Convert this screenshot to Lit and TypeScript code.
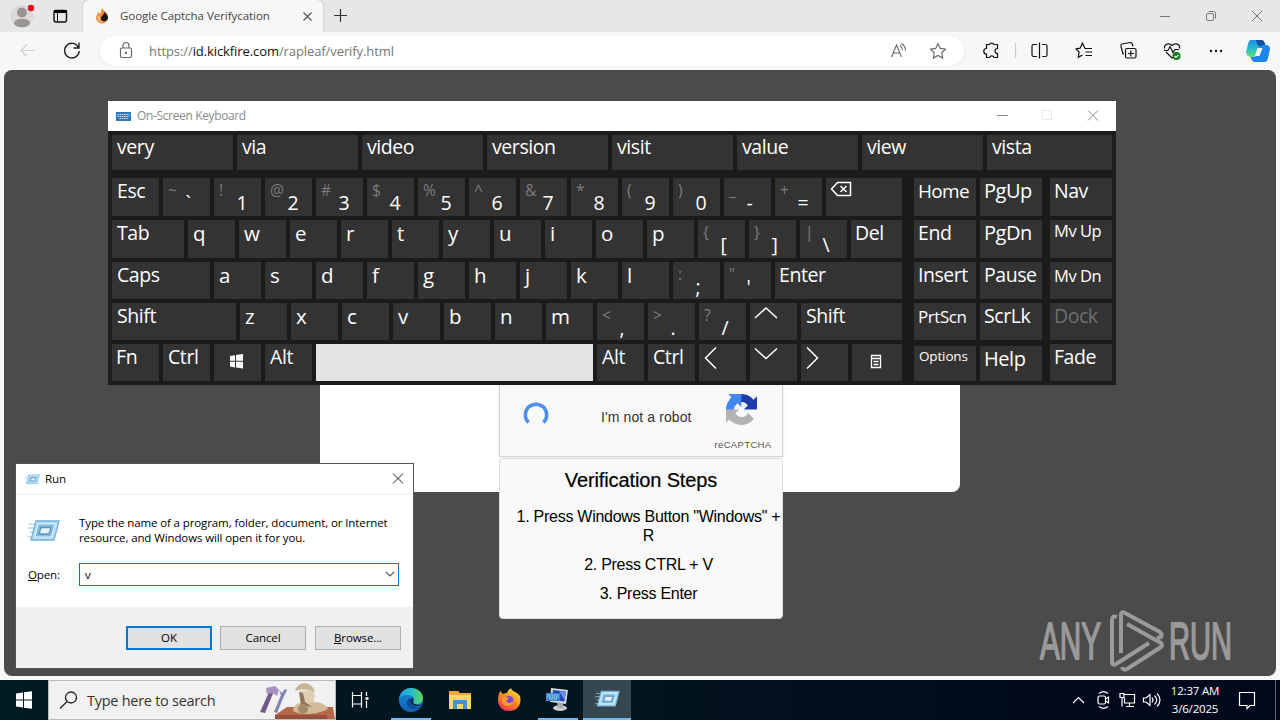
import { LitElement, html, css, svg, nothing } from 'lit';
import { customElement, property } from 'lit/decorators.js';
import { classMap } from 'lit/directives/class-map.js';

type Key = {
  t?: string;
  // shifted character, drawn dim in the top left
  s?: string;
  w?: number;
  c?: string;
  icon?: string;
};

const k = (t: string, w = 47, c = ''): Key => ({ t, w, c });
const ch = (t: string, w = 47): Key => ({ t, w, c: 'letter' });
const dual = (s: string, t: string, w = 47): Key => ({ s, t, w });

const WORDS = ['very', 'via', 'video', 'version', 'visit', 'value', 'view', 'vista'];

const ROWS: Key[][] = [
  [
    k('Esc'), dual('~', '`'), dual('!', '1'), dual('@', '2'), dual('#', '3'),
    dual('$', '4'), dual('%', '5'), dual('^', '6'), dual('&', '7'), dual('*', '8'),
    dual('(', '9'), dual(')', '0'), dual('_', '-'), dual('+', '='), { w: 76, icon: 'back' },
  ],
  [
    k('Tab', 72), ...'qwertyuiop'.split('').map((l) => ch(l)),
    dual('{', '['), dual('}', ']'), dual('|', '\\'), k('Del', 51, 'tight'),
  ],
  [
    k('Caps', 98), ...'asdfghjkl'.split('').map((l) => ch(l)),
    dual(':', ';'), dual('"', "'"), k('Enter', 127, 'tight'),
  ],
  [
    k('Shift', 124), ...'zxcvbnm'.split('').map((l) => ch(l)),
    dual('<', ','), dual('>', '.'), dual('?', '/'), { w: 47, icon: 'up' }, k('Shift', 101),
  ],
  [
    k('Fn', 47, 'tight'), k('Ctrl'), { w: 47, icon: 'win' }, k('Alt'), { w: 277, c: 'space' },
    k('Alt'), k('Ctrl'), { w: 47, icon: 'left' }, { w: 47, icon: 'down' },
    { w: 47, icon: 'right' }, { w: 50, icon: 'menu' },
  ],
];

const NAV: Key[][] = [
  [k('Home', 62, 's19'), k('PgUp', 62, 's20'), k('Nav', 62)],
  [k('End', 62), k('PgDn', 62, 's20'), k('Mv Up', 62, 's16 high')],
  [k('Insert', 62), k('Pause', 62), k('Mv Dn', 62, 's16')],
  [k('PrtScn', 62, 's17'), k('ScrLk', 62), k('Dock', 62, 'off')],
  [k('Options', 62, 's13 short'), k('Help', 62, 's20 short help'), k('Fade', 62)],
];

const KEY_ICONS: Record<string, unknown> = {
  back: svg`<svg class="glyph" width="76" height="38" fill="none" stroke="#fff" stroke-width="1.5">
    <path d="M11.500 4.500H24.500V17.500H11.500L5.500 11Z"/><path d="M14.500 8l6 6M20.500 8l-6 6"/></svg>`,
  up: svg`<svg class="glyph" width="47" height="37" fill="none" stroke="#fff" stroke-width="1.5"><path d="M5 15L16 5L27 15"/></svg>`,
  down: svg`<svg class="glyph" width="47" height="37" fill="none" stroke="#fff" stroke-width="1.5"><path d="M5 4.500L16 14.500L27 4.500"/></svg>`,
  left: svg`<svg class="glyph" width="47" height="37" fill="none" stroke="#fff" stroke-width="1.5"><path d="M17 3.500L6.500 14L17 24.500"/></svg>`,
  right: svg`<svg class="glyph" width="47" height="37" fill="none" stroke="#fff" stroke-width="1.5"><path d="M6 3.500L16.500 14L6 24.500"/></svg>`,
  win: svg`<svg class="glyph" width="47" height="37" fill="#fff"><path d="M16 12l5-.8v5.500H16zM22 11l7-1v6.700H22zM16 17.700h5v5.700l-5-.8zM22 17.700h7v6.700l-7-1z"/></svg>`,
  menu: svg`<svg class="glyph" width="50" height="37" fill="none" stroke="#fff" stroke-width="1.300"><path d="M19.500 11.500h9v12h-9zM19 14.500h10M21.500 17.500h5M21.500 20.500h5"/></svg>`,
};

const runIcon = (w: number, h: number) => html`<svg width=${w} height=${h} viewBox="0 0 32 24">
  <path d="M1 5h7M0 9h7M2 13h4M0 18h5" stroke="#8fc0e4" stroke-width="1"/>
  <path d="M8 2H31L26 21H3Z" fill="#b9dcf3" stroke="#6fb2de" stroke-width="1.300"/>
  <path d="M10 5H27L23.500 18H7Z" fill="#7dbce4" stroke="#e4f4fd"/>
  <path d="M13 8.500H23L21 15H11Z" fill="#e9f2f8" stroke="#5c94bf" stroke-width="1.300"/>
</svg>`;

@customElement('screen-keyboard')
export class ScreenKeyboard extends LitElement {
  static styles = css`
    :host {
      display: flex;
      flex-direction: column;
      width: 1008px;
      height: 284px;
      font-family: "Open Sans", "Noto Sans", sans-serif;
      background: #1b1b1b;
    }
    .title {
      display: flex;
      align-items: center;
      height: 30px;
      padding-left: 8px;
      background: #fff;
      color: #8b8b8b;
      font-size: 12px;
    }
    .title span {
      flex: 1;
      padding: 0 0 1px 6px;
      letter-spacing: -0.36px;
    }
    .words {
      display: flex;
      gap: 4px;
      padding: 4px 4px 8px;
    }
    .words .key {
      width: 121px;
      height: 35px;
      line-height: 24px;
    }
    .words .key:last-child {
      width: 125px;
    }
    .body {
      display: flex;
      padding: 0 4px;
    }
    .block {
      display: grid;
      grid-template-rows: 38px 38px 37px 37px 37px;
      row-gap: 4px;
      margin-right: 12px;
    }
    .nav {
      margin-right: 0;
    }
    .row {
      display: flex;
      gap: 4px;
    }
    .nav .key {
      padding-left: 4px;
      letter-spacing: -0.45px;
    }
    .nav .key:last-child {
      margin-left: 4px;
    }
    .key {
      position: relative;
      box-sizing: border-box;
      padding-left: 5px;
      background: #333;
      color: #fff;
      font-size: 19.5px;
      line-height: 26px;
      letter-spacing: -0.42px;
      white-space: nowrap;
    }
    .key.tight {
      padding-left: 4px;
    }
    .letter {
      font-size: 20.5px;
      line-height: 26px;
    }
    .dual {
      display: flex;
    }
    .dual .main {
      padding-top: 12px;
    }
    .dim {
      width: 17.5px;
      color: #7d7d7d;
      font-size: 15.5px;
      line-height: 24px;
    }
    .space {
      background: #e4e4e4;
    }
    .glyph {
      display: block;
      margin-left: -5px;
    }
    .s20 { font-size: 20px; line-height: 25px; }
    .s19 { font-size: 19px; }
    .nav .s19 { letter-spacing: -0.7px; }
    .s17 { font-size: 17px; line-height: 27px; }
    .s16 { font-size: 16.5px; line-height: 27px; }
    .s13 { font-size: 13.5px; line-height: 21px; }
    .nav .s13 { letter-spacing: -0.15px; padding-left: 5px; }
    .high { line-height: 21px; }
    .help { line-height: 26px; }
    .short { margin-top: 2px; }
    .off { color: #6f6f6f; }
  `;

  renderKey(key: Key) {
    const cls = `key ${key.c ?? ''} ${key.s ? 'dual' : ''}`;
    return html`<div class=${cls} style="width:${key.w}px">${key.s
      ? html`<span class="dim">${key.s}</span><span class="main">${key.t}</span>`
      : key.icon ? KEY_ICONS[key.icon] : key.t ?? nothing}</div>`;
  }

  render() {
    return html`
      <div class="title">
        <svg width="15" height="9"><rect width="15" height="9" fill="#2c78c0"/>
          <path d="M1.500 2.500h12M1.500 4.500h12M3.500 6.500h8" stroke="#d5e8f8" stroke-dasharray="1.500 .7"/></svg>
        <span>On-Screen Keyboard</span>
        <svg width="124" height="30" fill="none" stroke="#8a8a8a">
          <path d="M5 14.500h11"/><path d="M50.500 9.500h9v9h-9z" stroke="#e9e9e9"/>
          <path d="M96 9.500l10 10M106 9.500l-10 10"/></svg>
      </div>
      <div class="words">${WORDS.map((w) => html`<div class="key">${w}</div>`)}</div>
      <div class="body">
        <div class="block">${ROWS.map((r) => html`<div class="row">${r.map((x) => this.renderKey(x))}</div>`)}</div>
        <div class="block nav">${NAV.map((r) => html`<div class="row">${r.map((x) => this.renderKey(x))}</div>`)}</div>
      </div>
    `;
  }
}

@customElement('run-dialog')
export class RunDialog extends LitElement {
  static styles = css`
    :host {
      display: flex;
      flex-direction: column;
      box-sizing: border-box;
      width: 399px;
      height: 206px;
      border: 1px solid #555;
      background: #fff;
      color: #000;
      font: 11.5px/15px "Open Sans", "Noto Sans", sans-serif;
      letter-spacing: -0.11px;
    }
    .title {
      display: flex;
      align-items: center;
      height: 30px;
      padding: 0 9px;
      border-bottom: 1px solid #eee;
    }
    .title span {
      flex: 1;
      padding: 0 0 2px 5px;
    }
    .info {
      display: flex;
      gap: 19px;
      padding: 20px 0 0 12px;
    }
    .info svg {
      margin-top: 4px;
    }
    .open {
      display: flex;
      align-items: center;
      padding: 18px 14px 0 12px;
    }
    .open label {
      width: 51px;
    }
    .field {
      display: flex;
      flex: 1;
      align-items: center;
      justify-content: space-between;
      box-sizing: border-box;
      height: 23px;
      padding: 0 3px 0 5px;
      border: 1px solid #0078d7;
    }
    .foot {
      display: flex;
      flex: 1;
      gap: 8px;
      align-items: flex-start;
      justify-content: flex-end;
      margin-top: 21px;
      padding: 19px 12px 0 0;
      background: #f0f0f0;
    }
    .btn {
      box-sizing: border-box;
      width: 86px;
      height: 24px;
      border: 1px solid #adadad;
      background: #e1e1e1;
      line-height: 22px;
      text-align: center;
    }
    .cancel {
      margin-right: 1px;
    }
    .primary {
      border: 2px solid #0078d7;
      line-height: 20px;
    }
  `;

  render() {
    return html`
      <div class="title">${runIcon(15, 11)}<span>Run</span>
        <svg width="12" height="12" fill="none" stroke="#222"><path d="M1 .5l10 10M11 .5L1 10.500"/></svg></div>
      <div class="info">${runIcon(32, 24)}
        <div>Type the name of a program, folder, document, or Internet<br>resource, and Windows will open it for you.</div>
      </div>
      <div class="open">
        <label><u>O</u>pen:</label>
        <div class="field">v<svg width="10" height="7" fill="none" stroke="#555" stroke-width="1.200"><path d="M1 1l4 4l4-4"/></svg></div>
      </div>
      <div class="foot">
        <div class="btn primary">OK</div>
        <div class="btn cancel">Cancel</div>
        <div class="btn"><u>B</u>rowse...</div>
      </div>
    `;
  }
}

@customElement('task-bar')
export class TaskBar extends LitElement {
  static styles = css`
    :host {
      display: flex;
      height: 40px;
      background: linear-gradient(90deg, #001a22, #03141e 50%, #000a1c 80%);
      color: #fff;
      font: 11.5px/18px "Open Sans", "Noto Sans", sans-serif;
    }
    svg {
      display: block;
    }
    .start {
      width: 48px;
    }
    .search {
      display: flex;
      box-sizing: border-box;
      width: 288px;
      border: 1px solid #b9bcbd;
      background: #f1f1f1;
      color: #333;
      font-size: 14.5px;
      line-height: 39px;
      letter-spacing: -0.27px;
    }
    .search span {
      flex: 1;
    }
    .app {
      box-sizing: border-box;
      width: 50px;
      height: 40px;
    }
    .tab {
      display: flex;
      box-sizing: border-box;
      justify-content: center;
      width: 40px;
      height: 40px;
      margin: 0 4.500px;
      padding-top: 8px;
      border-bottom: 2px solid transparent;
    }
    .open {
      border-bottom-color: #76b9ed;
    }
    .active {
      width: 48px;
      margin: 0 0 0 1px;
      background: #37474f;
    }
    .tray {
      display: flex;
      flex: 1;
      justify-content: flex-end;
    }
    .clock {
      width: 62px;
      padding-top: 2px;
      text-align: center;
      letter-spacing: -0.2px;
    }
  `;

  app(icon: unknown, open = false, active = false) {
    return html`<div class=${classMap({ tab: true, open, active })}>${icon}</div>`;
  }

  render() {
    return html`
      <svg class="start" width="48" height="40" fill="#fff"><path d="M16 13.500l7-1v7H16zM24 12.300l8-1.100v8.300H24zM16 20.500h7v7l-7-1zM24 20.500h8v8.300l-8-1.100z"/></svg>
      <div class="search">
        <svg width="38" height="38" fill="none" stroke="#222" stroke-width="1.300"><circle cx="22" cy="16.500" r="5.500"/><path d="M18 20.500L11 27.500"/></svg>
        <span>Type here to search</span>
        <svg width="77" height="38">
          <path d="M2 31L12 9l4 1L7 32z" fill="#74588a"/><path d="M8 7l9-2 4 4-2 6-4-3-6 1z" fill="#a892c4"/>
          <path d="M16 31L23 14l-2-5 3 3 3-4 2 1-3 6-7 17z" fill="#7e84b4"/>
          <path d="M17 34l12-8h46l2 12H17z" fill="#b5694c"/><path d="M17 34h52v4H17z" fill="#99503a"/>
          <path d="M35 30c0-6 5-8 9-9l1-6h10l1 6c8 0 12 3 14 7-8 5-27 7-35 2z" fill="#d3ba98"/>
          <path d="M42 10l13-1 2 6-2 6-8 3-4-5z" fill="#dfcdb0"/>
          <path d="M37 10c3-11 17-10 20 1-6-3-12-3-20-1z" fill="#c9b594"/>
          <path d="M41 11l4 1 2 9 7 5-11-2z" fill="#8f7358"/>
          <circle cx="45" cy="28" r="5" fill="#a68b6b"/>
        </svg>
      </div>
      <svg class="app" width="50" height="40" fill="none" stroke="#fff" stroke-width="1.200">
        <path d="M16.500 12v3.500h9V12M16.500 27.500V24h9v3.500M16.500 16v8M25.500 16v8M30.500 12v4M30.500 21v7"/><path d="M29.500 18.500h3" stroke-width="2.500"/></svg>
      ${this.app(html`<svg width="24" height="24" viewBox="0 0 24 24">
        <defs><linearGradient id="ea" x2="1"><stop stop-color="#1e9de0"/><stop offset=".5" stop-color="#27bdcc"/><stop offset="1" stop-color="#62d55a"/></linearGradient>
        <linearGradient id="eb" x2="0" y2="1"><stop stop-color="#1c8fd8"/><stop offset="1" stop-color="#1260b4"/></linearGradient></defs>
        <circle cx="12" cy="12" r="12" fill="url(#eb)"/>
        <path d="M0 11C1 4 6 0 12 0c8 0 12 6 12 10 0 4-3 6-6 6-4 0-4-1.500-3-3 1-3-2-6-6-6C4 7 1 9 0 11z" fill="url(#ea)"/>
        <path d="M9 11c-3 4 0 10 6 10 3 0 5-1 7-2-4 1-9 0-10-4-.6-2 0-3 1-4-1-1-3-1-4 0z" fill="#0d4a96"/>
        <path d="M14 13c1-1.500 0-3-1.500-3.500.5 1.500-.5 2.500-.5 4 0 2.500 3 4.500 6 4.500 2 0 3.500-.7 4.500-1.600C20 17.500 13 17 14 13z" fill="#06202e"/></svg>`, true)}
      ${this.app(html`<svg width="22" height="24" viewBox="0 0 22 24"><path d="M0 3h9l2 2h11v16H0z" fill="#eaa93a"/><path d="M0 7h22v14H0z" fill="#fdd667"/><path d="M4 21v-9h14v9h-4v-5H8v5z" fill="#3f94cf"/></svg>`)}
      ${this.app(html`<svg width="24" height="24" viewBox="0 0 24 24">
        <defs><linearGradient id="ff" x1=".8" x2=".2" y2="1"><stop stop-color="#ffe03c"/><stop offset=".5" stop-color="#ff8a1e"/><stop offset="1" stop-color="#f62a5c"/></linearGradient></defs>
        <path d="M3 3l3 3c2-1 3-1 4-1 1-3 3-4 4-5 0 3 6 4 8 7l1 1c2 8-2 15-11 15C5 23 1 18 1 12c0-4 1-6 2-9z" fill="url(#ff)"/>
        <circle cx="12" cy="12.500" r="4.600" fill="#7646d8"/><path d="M5 10c3-2 5 0 7 0-1 2-3 2-3 3 2 3 6 2 7 0 1 5-9 8-11 1z" fill="#ff9a26"/></svg>`)}
      ${this.app(html`<svg width="24" height="24" viewBox="0 0 24 24"><path d="M5 0l17 2-2 14-16-2z" fill="#d6d9dd"/><path d="M7 2l13 1.500-1.500 10L6 12z" fill="#2346b8"/><path d="M13 3l7 1-1.500 8z" fill="#6a90e8"/>
        <ellipse cx="14" cy="20" rx="7" ry="3" fill="#c9cccf"/><path d="M11 14l6 1v5h-5z" fill="#a9adb2"/><path d="M0 5h14v8H0z" fill="#2d82cc"/><path d="M1 7h12M1 9h12M3 11h8" stroke="#dcecf8" stroke-dasharray="1.500 .8"/></svg>`, true)}
      ${this.app(runIcon(25, 22), true, true)}
      <div class="tray">
        <svg width="99" height="40" fill="none" stroke="#fff" stroke-width="1.200">
          <path d="M8 23l5.500-5.500L19 23"/>
          <rect x="33" y="16" width="7.500" height="8" rx="1.500"/><path d="M40.500 19l3-2v6l-3-2M34 13.500c3-2.500 6-2.500 9 0M34 26.500c3 2.500 6 2.500 9 0"/>
          <path d="M58 14.500h11.500v8.500H59.500v-5M64.500 23v3M61 26.500h8M55 13.500h4v4h-4zM57 17.500v9"/>
          <path d="M78.500 18v4h2.500l4 3.500v-11L81 18zM87 17.500c1.500 2 1.500 3 0 5M89.500 15.500c3 3 3 6 0 9M92 13.500c4 4 4 9 0 13"/></svg>
        <div class="clock">12:37 AM<br>3/6/2025</div>
        <svg width="54" height="40" fill="none" stroke="#fff" stroke-width="1.200"><path d="M13.500 12.500h15v13h-4.500l-3 3v-3h-7.500z"/><path d="M49.500 0v40" stroke="#5b6270" stroke-width="1"/></svg>
      </div>
    `;
  }
}

@customElement('app-root')
export class AppRoot extends LitElement {
  @property() url = 'id.kickfire.com';

  static styles = css`
    :host {
      position: relative;
      display: flex;
      flex-direction: column;
      width: 1280px;
      height: 720px;
      overflow: hidden;
      background: #f7f7f7;
      font-family: "Open Sans", "Noto Sans", sans-serif;
    }
    svg {
      display: block;
    }
    .tabs {
      display: flex;
      height: 32px;
      background: #e7e7e7;
    }
    .tab {
      display: flex;
      align-items: center;
      box-sizing: border-box;
      width: 240px;
      padding: 0 8px 0 12px;
      border-radius: 6px 6px 0 0;
      background: #f7f7f7;
      box-shadow: 0 0 2px #aaa;
      color: #444;
      font-size: 11.5px;
      letter-spacing: -0.04px;
      clip-path: inset(0 -3px 0 -3px);
    }
    .tab span {
      flex: 1;
      padding: 0 0 1px 10px;
    }
    .caption {
      margin-left: auto;
    }
    .tools {
      display: flex;
      align-items: center;
      height: 38px;
      background: #f7f7f7;
    }
    .address {
      display: flex;
      align-items: center;
      width: 864px;
      height: 30px;
      border-radius: 15px;
      background: #fff;
      box-shadow: 0 0 2px #e3e3e3;
      color: #767676;
      font-size: 13px;
      letter-spacing: -0.09px;
    }
    .address span {
      flex: 1;
    }
    .address b {
      color: #111;
      font-weight: 400;
    }
    .page {
      position: relative;
      flex: 1;
      display: flex;
      justify-content: center;
      align-items: flex-start;
      margin: 0 4px 4px;
      padding-top: 230px;
      border-radius: 8px;
      background: #4b4b4b;
      font-family: "Liberation Sans", Arial, sans-serif;
    }
    .card {
      display: flex;
      justify-content: center;
      align-items: flex-start;
      width: 640px;
      height: 192px;
      border-radius: 0 0 8px 8px;
      background: #fff;
    }
    .captcha {
      display: flex;
      box-sizing: border-box;
      width: 284px;
      height: 157px;
      margin-left: 2px;
      padding: 92px 10px 0 23px;
      border: 1px solid #d3d3d3;
      background: #f9f9f9;
      box-shadow: 0 0 3px rgba(0, 0, 0, 0.1);
      color: #333;
      font-size: 14px;
    }
    .captcha p {
      flex: 1;
      margin: 16px 0 0;
      padding-left: 52px;
      letter-spacing: 0.1px;
      white-space: nowrap;
    }
    .brand {
      display: flex;
      flex-direction: column;
      align-items: center;
      width: 58px;
      padding-top: 1px;
      color: #555;
      font-size: 9.5px;
      letter-spacing: 0.35px;
    }
    .brand svg {
      margin: 0 4px 14px 0;
    }
    .steps {
      position: absolute;
      left: 495px;
      top: 388px;
      box-sizing: border-box;
      width: 284px;
      height: 161px;
      padding-top: 10px;
      border: 1px solid #ddd;
      border-radius: 4px;
      background: #f9f9f9;
      color: #000;
      font-size: 16px;
      line-height: 19px;
      letter-spacing: -0.27px;
      text-align: center;
    }
    .steps h3 {
      margin: 0 0 15px;
      font-size: 20px;
      font-weight: 400;
      line-height: 23px;
      letter-spacing: -0.12px;
      -webkit-text-stroke: 0.2px #000;
    }
    .steps p {
      margin: 0 0 10px 15px;
    }
    .osk {
      position: absolute;
      left: 108px;
      top: 101px;
    }
    .run {
      position: absolute;
      left: 15px;
      top: 463px;
    }
    .mark {
      position: absolute;
      left: 1034px;
      top: 604px;
    }
  `;

  render() {
    return html`
      <div class="tabs">
        <svg width="83" height="32"><circle cx="22" cy="16" r="11.500" fill="#dcdad8"/><circle cx="22" cy="12.500" r="5" fill="#999593"/><ellipse cx="22" cy="23" rx="8" ry="4.200" fill="#999593"/>
          <circle cx="31" cy="8" r="3.200" fill="#e00b1c"/>
          <rect x="54" y="10.500" width="12.500" height="11.500" rx="2" fill="none" stroke="#111" stroke-width="1.400"/><path d="M54 10h13v3H54z"/><path d="M57.500 13v9" stroke="#111"/></svg>
        <div class="tab">
          <svg width="15" height="16"><path d="M7 0c1 3 6 4 6 9a6 6 0 01-12 1c0-3 2-4 2-6l2 2z" fill="#f08a35"/><path d="M9 4c3 2 4 4 4 6-1 4-5 4-7 2-1-4 3-4 3-8z" fill="#1d1512"/><path d="M2 8c0 6 5 7 8 6-3 0-5-2-5-5l-1-2z" fill="#fbb67c"/></svg>
          <span>Google Captcha Verifycation</span>
          <svg width="16" height="16" fill="none" stroke="#555" stroke-width="1.200"><path d="M4.500 4.500l8 8M12.500 4.500l-8 8"/></svg>
        </div>
        <svg width="34" height="32" fill="none" stroke="#333" stroke-width="1.200"><path d="M17.500 9v13M11 15.500h13"/></svg>
        <svg class="caption" width="130" height="32" fill="none" stroke="#777"><path d="M10 16.500h10"/><rect x="56.500" y="13.500" width="7" height="7" rx="1.500"/><path d="M58.500 11.500h5a2 2 0 012 2v5"/><path d="M102 11l10 10M112 11l-10 10"/></svg>
      </div>
      <div class="tools">
        <svg width="100" height="38" fill="none"><path d="M35 18.500H21M27 12.500l-6 6l6 6" stroke="#cfcfcf" stroke-width="1.200"/>
          <path d="M78.500 15.500a7.300 7.300 0 10.700 3.500M79 10.500v5.500h-5.500" stroke="#222" stroke-width="1.400"/></svg>
        <div class="address">
          <svg width="49" height="30" fill="none" stroke="#666" stroke-width="1.200"><rect x="20.500" y="12" width="11" height="9.500" rx="1.500"/><path d="M23 12v-2.500a3 3 0 016 0V12"/><circle cx="26" cy="16.700" r=".6"/></svg>
          <span>https://<b>${this.url}</b>/rapleaf/verify.html</span>
          <svg width="80" height="30" fill="none" stroke="#666" stroke-width="1.100"><path d="M7.500 21l5-12 5 12M9.300 17h6.500M16 9.500c2 1.500 2.500 3 2.500 5M17 7.500c3 1.500 4.500 4 4.500 7"/>
            <path d="M54 7.500l2.300 4.900 5.200.7-3.800 3.700 1 5.300-4.700-2.600-4.700 2.600 1-5.300-3.800-3.700 5.200-.7z"/></svg>
        </div>
        <svg width="316" height="38" fill="none" stroke="#111" stroke-width="1.200">
          <path d="M22.500 12.500h3a2.500 2.500 0 014.500 0h3.500v4a2.300 2.300 0 000 5v4H30a2.400 2.400 0 00-4.500 0h-3v-3.500a2.700 2.700 0 010-5.500z"/>
          <path d="M51.500 11v15" stroke="#ccc"/>
          <path d="M73 12.500h-3.500q-1.500 0-1.500 1.500v9q0 1.500 1.500 1.500H73M78 12.500h3.500q1.500 0 1.500 1.500v9q0 1.500-1.500 1.500H78M75.500 10.500v16"/>
          <path d="M123 16.500h-2l-2.500-5.300-2.400 5-4 .7 3 3.100-.8 5.300 4.200-2.300M121 16.500h7M121.500 20h6.500M121.500 23.500h6.500"/>
          <rect x="161.500" y="16.500" width="10.500" height="9.500" rx="1.500"/><path d="M166.800 18.500v6M163.800 21.500h6M160 22h-1l-2-7.500q-.5-2 1-2.500l8-1.500q2 0 2.500 2l.5 2"/>
          <path d="M202 20l6 6 3-2M200.500 16.500c-.5-4.500 5-6 7.500-3 3-3 8.500-1.500 7.500 3M200 18.500h4l2-4 3 6 2-3h4"/>
          <circle cx="212.500" cy="24" r="4" fill="#107c10" stroke="none"/><path d="M210.500 24l1.500 1.500 2.500-2.500" stroke="#fff"/>
          <g fill="#111" stroke="none"><circle cx="247" cy="19" r="1.200"/><circle cx="252" cy="19" r="1.200"/><circle cx="257" cy="19" r="1.200"/></g>
          <defs><linearGradient id="ca" x2="0" y2="1"><stop stop-color="#1e8fe8"/><stop offset=".6" stop-color="#2fc3c0"/><stop offset="1" stop-color="#6bdc6a"/></linearGradient></defs>
          <g stroke="none"><path d="M287 8h10q3 0 4 4l1 3h-4q-3 0-4 3l-2 5q-1 2-4 2-6 0-6-5l2-8q1-4 3-4z" fill="url(#ca)"/>
          <path d="M292 8h5q3 0 4 4l1 3h-5q-4-1-5-7z" fill="#124f9c"/>
          <path d="M301 30h-10q-3 0-4-4l-1-1h3q3 0 4-3l2-6q1-3 4-3h3q4 0 4 4l-2 9q-1 4-3 4z" fill="#1f86f0"/>
          <path d="M293.500 16h5l-3 8h-4.500z" fill="#f4f8fc"/></g></svg>
      </div>
      <div class="page">
        <div class="card">
          <div class="captcha">
            <svg width="26" height="50" fill="none"><path d="M5.500 29.500A10.700 10.700 0 1120.500 29.500" stroke="#4f8fee" stroke-width="3.500"/></svg>
            <p>I'm not a robot</p>
            <div class="brand">
              <svg width="31" height="31" viewBox="0 0 64 64">
                <path d="M64 31.955l-.033-1.370V4.687l-7.160 7.160C50.948 4.674 42.033.093 32.050.093c-10.400 0-19.622 4.960-25.458 12.640l11.736 11.860a15.550 15.550 0 0 1 4.754-5.334c2.050-1.600 4.952-2.906 8.968-2.906.485 0 .86.057 1.135.163 4.976.393 9.288 3.140 11.828 7.124l-8.307 8.307z" fill="#1c3aa9"/>
                <path d="M31.862.094l-1.370.033H4.594l7.160 7.160C4.580 13.147 0 22.060 0 32.046c0 10.400 4.960 19.622 12.640 25.458L24.500 45.768a15.550 15.550 0 0 1-5.334-4.754c-1.600-2.050-2.906-4.952-2.906-8.968 0-.485.057-.86.163-1.135.393-4.976 3.140-9.288 7.124-11.828l8.307 8.307z" fill="#4285f4"/>
                <path d="M.001 32.045l.033 1.370v25.898l7.160-7.160c5.860 7.173 14.774 11.754 24.760 11.754 10.400 0 19.622-4.960 25.458-12.640l-11.736-11.860a15.550 15.550 0 0 1-4.754 5.334c-2.050 1.600-4.952 2.906-8.968 2.906-.485 0-.86-.057-1.135-.163-4.976-.393-9.288-3.140-11.828-7.124l8.307-8.307z" fill="#b3b3b3"/></svg>
              reCAPTCHA
            </div>
          </div>
        </div>
        <div class="steps">
          <h3>Verification Steps</h3>
          <p>1. Press Windows Button "Windows" + R</p>
          <p>2. Press CTRL + V</p>
          <p>3. Press Enter</p>
        </div>
      </div>
      <task-bar></task-bar>
      <svg class="mark" width="246" height="73" fill="none" stroke="#9a9a9a" stroke-width="4" stroke-linejoin="round">
        <g fill="#9a9a9a" stroke-width="1.800" font-family="Liberation Sans, sans-serif" font-size="51">
          <text x="6" y="55" textLength="61" lengthAdjust="spacingAndGlyphs">ANY</text>
          <text x="135" y="55" textLength="63" lengthAdjust="spacingAndGlyphs">RUN</text></g>
        <path d="M83 13q-5-2-5 3V58q0 4 4 2L115 39"/>
        <path d="M87 49V11q0-4 4-2L126 28q3 3 1 5l-4 1M93 20L127 39q2 2 0 4L93 65q-4 2-5-2"/>
      </svg>
      <screen-keyboard class="osk"></screen-keyboard>
      <run-dialog class="run"></run-dialog>
    `;
  }
}
